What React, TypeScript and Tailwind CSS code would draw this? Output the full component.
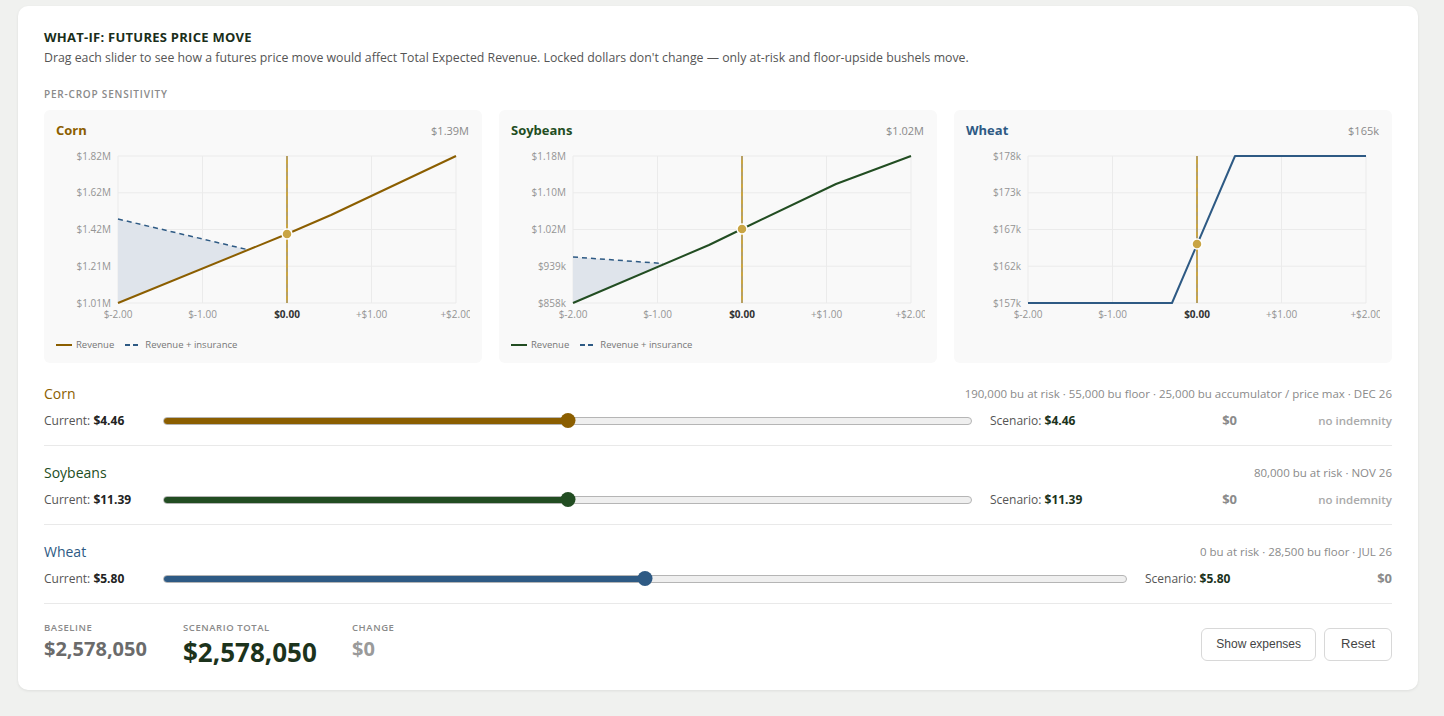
import React from 'react'

type Pt = [number, number]

type ChartSpec = {
  name: string
  total: string
  color: string
  yLabels: string[]
  line: Pt[]
  dashed?: Pt[]
  fill?: Pt[]
  dot: Pt
}

const charts: ChartSpec[] = [
  {
    name: 'Corn',
    total: '$1.39M',
    color: '#8b5e00',
    yLabels: ['$1.82M', '$1.62M', '$1.42M', '$1.21M', '$1.01M'],
    line: [[62, 161], [231, 92], [275, 73], [400, 14]],
    dashed: [[62, 77], [191, 107.5]],
    fill: [[62, 77], [191, 107.5], [62, 161]],
    dot: [231, 92],
  },
  {
    name: 'Soybeans',
    total: '$1.02M',
    color: '#224d22',
    yLabels: ['$1.18M', '$1.10M', '$1.02M', '$939k', '$858k'],
    line: [[62, 161], [198, 103], [231, 87], [325, 42], [400, 14]],
    dashed: [[62, 115], [152, 121.5]],
    fill: [[62, 115], [152, 121.5], [62, 161]],
    dot: [231, 87],
  },
  {
    name: 'Wheat',
    total: '$165k',
    color: '#2e5a84',
    yLabels: ['$178k', '$173k', '$167k', '$162k', '$157k'],
    line: [[62, 161], [206, 161], [269, 14], [400, 14]],
    dot: [231, 102],
  },
]

const xs = [62, 146.5, 231, 315.5, 400]
const ys = [14, 50.75, 87.5, 124.25, 161]
const xLabels = ['$-2.00', '$-1.00', '$0.00', '+$1.00', '+$2.00']

const pts = (p: Pt[]) => p.map(([x, y]) => `${x},${y}`).join(' ')

function CropChart({ c }: { c: ChartSpec }) {
  return (
    <div className="bg-[#f9f9f9] rounded-md pt-[11px] pb-[13px] px-3 flex flex-col">
      <div className="flex items-center justify-between h-[20px]">
        <span className="text-[13px] font-bold" style={{ color: c.color }}>{c.name}</span>
        <span className="text-[11px] text-[#8a8a8a] pr-[1px]">{c.total}</span>
      </div>
      {/* plot; the last x label runs past the edge and is cut, as in the app */}
      <svg width="414" height="180" className="mt-[1px] block overflow-hidden">
        {ys.map((y) => (
          <line key={y} x1={62} x2={400} y1={y} y2={y} stroke="#ebebeb" strokeWidth={1} />
        ))}
        {xs.map((x) => (
          <line key={x} x1={x} x2={x} y1={14} y2={161} stroke="#ebebeb" strokeWidth={1} />
        ))}
        {c.fill && <polygon points={pts(c.fill)} fill="#dfe4eb" />}
        <line x1={231} x2={231} y1={14} y2={161} stroke="#c9a545" strokeWidth={2} />
        <line x1={231} x2={231} y1={14} y2={161} stroke="#9a9a9a" strokeWidth={1} strokeDasharray="4 4" opacity={0.7} />
        {c.dashed && (
          <polyline points={pts(c.dashed)} fill="none" stroke="#2e5a84" strokeWidth={1.5} strokeDasharray="5 4" />
        )}
        <polyline points={pts(c.line)} fill="none" stroke={c.color} strokeWidth={2} strokeLinejoin="round" />
        <circle cx={c.dot[0]} cy={c.dot[1]} r={5} fill="#c9a545" stroke="#fff" strokeWidth={1.5} />
        {c.yLabels.map((t, i) => (
          <text key={t} x={55} y={ys[i] + 3.5} textAnchor="end" fontSize="10" fill="#949494">{t}</text>
        ))}
        {xLabels.map((t, i) => (
          <text
            key={t}
            x={xs[i]}
            y={176}
            textAnchor="middle"
            fontSize="10"
            fill={i === 2 ? '#333' : '#949494'}
            fontWeight={i === 2 ? 700 : 400}
          >
            {t}
          </text>
        ))}
      </svg>
      {c.dashed && (
        <div className="mt-[18px] flex items-center gap-[11px] text-[9.5px] text-[#777] leading-none">
          <span className="flex items-center gap-1">
            <svg width="16" height="4"><line x1="0" x2="16" y1="2" y2="2" stroke={c.color} strokeWidth={2} /></svg>
            Revenue
          </span>
          <span className="flex items-center gap-1">
            <svg width="16" height="4"><line x1="0" x2="16" y1="2" y2="2" stroke="#2e5a84" strokeWidth={2} strokeDasharray="5 3" /></svg>
            Revenue + insurance
          </span>
        </div>
      )}
    </div>
  )
}

type RowSpec = {
  name: string
  color: string
  detail: string
  price: string
  indemnity: boolean
}

const rows: RowSpec[] = [
  { name: 'Corn', color: '#8b5e00', detail: '190,000 bu at risk · 55,000 bu floor · 25,000 bu accumulator / price max · DEC 26', price: '$4.46', indemnity: true },
  { name: 'Soybeans', color: '#224d22', detail: '80,000 bu at risk · NOV 26', price: '$11.39', indemnity: true },
  { name: 'Wheat', color: '#2e5a84', detail: '0 bu at risk · 28,500 bu floor · JUL 26', price: '$5.80', indemnity: false },
]

function SliderRow({ r, first }: { r: RowSpec; first: boolean }) {
  const pct = 50
  return (
    <div className={`border-b border-[#e9e9e9] pb-[13px] ${first ? 'pt-[12px]' : 'pt-[16px]'}`}>
      <div className="flex items-center justify-between h-[22px]">
        <span className="text-[14px]" style={{ color: r.color }}>{r.name}</span>
        <span className="text-[11.5px] text-[#8a8a8a]">{r.detail}</span>
      </div>
      <div className="mt-[5px] flex items-center gap-[18px] h-[22px]">
        <div className="w-[101px] text-[12px] text-[#555] whitespace-nowrap">
          Current: <span className="font-bold text-[#222]">{r.price}</span>
        </div>
        <div className="flex-1 relative h-[16px] flex items-center">
          <div className="w-full h-[8px] rounded-full bg-[#efefef] border border-[#b5b5b5] overflow-hidden">
            <div className="h-full" style={{ width: `${pct}%`, background: r.color }} />
          </div>
          <div
            className="absolute top-0 w-[15px] h-[15px] rounded-full -translate-x-1/2"
            style={{ left: `${pct}%`, background: r.color }}
          />
        </div>
        <div className="w-[150px] text-[12px] text-[#555] whitespace-nowrap">
          Scenario: <span className="font-bold text-[#1c331c]">{r.price}</span>
        </div>
        <div className="w-[79px] text-right text-[13px] font-bold text-[#8a8a8a]">$0</div>
        {r.indemnity && (
          <div className="w-[137px] text-right text-[11.5px] font-semibold text-[#aaa]">no indemnity</div>
        )}
      </div>
    </div>
  )
}

export default function App() {
  return (
    <div
      className="min-h-[716px] bg-[#f0f1ef] pt-[6px] pl-[18px] pr-[26px] pb-[26px]"
      style={{ fontFamily: '"Open Sans", "Noto Sans", sans-serif' }}
    >
      <div className="bg-white rounded-[10px] shadow-[0_1px_3px_rgba(0,0,0,0.08)] px-[26px] pt-[22px] pb-[21px]">
        <h2 className="text-[13px] font-bold tracking-[0.02em] text-[#1a2e1a] leading-[18px]">WHAT-IF: FUTURES PRICE MOVE</h2>
        <p className="mt-[3px] text-[12.3px] text-[#555] leading-[18px]">
          Drag each slider to see how a futures price move would affect Total Expected Revenue. Locked dollars don't change — only at-risk and floor-upside bushels move.
        </p>
        <div className="mt-[20px] text-[10px] font-semibold tracking-[0.08em] text-[#8a8a8a] leading-[14px]">PER-CROP SENSITIVITY</div>
        <div className="mt-[9px] grid grid-cols-3 gap-[17px]">
          {charts.map((c) => (
            <CropChart key={c.name} c={c} />
          ))}
        </div>
        <div className="mt-[8px]">
          {rows.map((r, i) => (
            <SliderRow key={r.name} r={r} first={i === 0} />
          ))}
        </div>
        <div className="mt-[17px] flex items-start">
          <div className="w-[139px]">
            <div className="text-[9.5px] font-semibold tracking-[0.06em] text-[#8a8a8a] leading-[14px]">BASELINE</div>
            <div className="mt-[1px] text-[20px] font-bold text-[#6b6b6b] leading-[26px]">$2,578,050</div>
          </div>
          <div className="w-[169px]">
            <div className="text-[9.5px] font-semibold tracking-[0.06em] text-[#8a8a8a] leading-[14px]">SCENARIO TOTAL</div>
            <div className="text-[26px] font-bold text-[#1c331c] leading-[34px]">$2,578,050</div>
          </div>
          <div>
            <div className="text-[9.5px] font-semibold tracking-[0.06em] text-[#8a8a8a] leading-[14px]">CHANGE</div>
            <div className="mt-[1px] text-[20px] font-bold text-[#9a9a9a] leading-[26px]">$0</div>
          </div>
          <div className="ml-auto mt-[7px] flex gap-2" style={{ fontFamily: '"Liberation Sans", Arial, sans-serif' }}>
            <button className="h-[33px] px-[14px] rounded-md border border-[#d8d8d8] bg-white text-[12px] text-[#444]">Show expenses</button>
            <button className="h-[33px] px-[16px] rounded-md border border-[#d8d8d8] bg-white text-[13px] text-[#444]">Reset</button>
          </div>
        </div>
      </div>
    </div>
  )
}
